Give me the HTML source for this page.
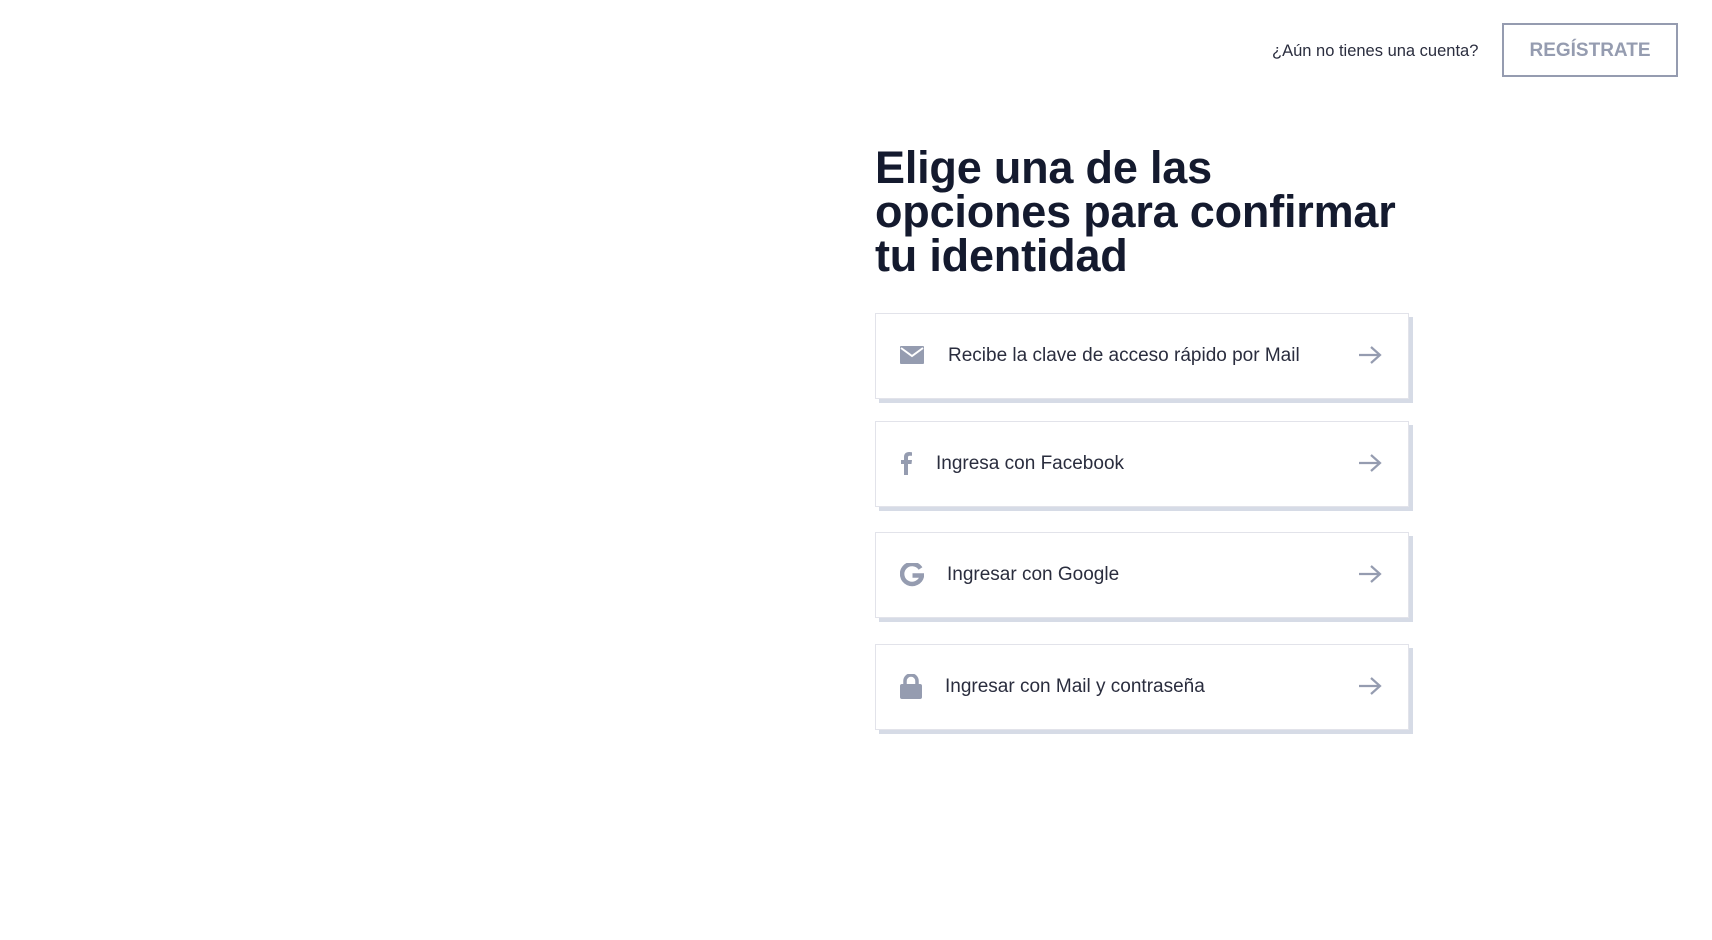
<!DOCTYPE html>
<html><head><meta charset="utf-8"><style>
body{margin:0;width:1712px;height:940px;background:#fff;font-family:"Liberation Sans",sans-serif;position:relative;overflow:hidden}
.q{position:absolute;left:1272px;top:42px;font-size:16.5px;color:#2a2d3e}
.reg{position:absolute;left:1502px;top:23px;width:172px;height:50px;border:2px solid #959cb0;color:#959cb0;font-weight:bold;font-size:19px;text-align:center;line-height:52px}
h1{position:absolute;left:875px;top:146px;margin:0;font-size:45px;line-height:44px;color:#141a2e;font-weight:bold;letter-spacing:-0.2px}
.card{position:absolute;left:875px;width:532px;height:84px;border:1px solid #e2e3ea;box-shadow:4px 4px 0 #d6dbe6;background:#fff}
.card span{position:absolute;top:0;line-height:84px;font-size:19px;color:#2a2d3e}
.card svg{position:absolute}
.arr{right:26px;top:31px}
</style></head><body>
<div class="q">¿Aún no tienes una cuenta?</div>
<div class="reg">REGÍSTRATE</div>
<h1>Elige una de las<br>opciones para confirmar<br>tu identidad</h1>

<div class="card" style="top:313px">
<svg style="left:24px;top:32px" width="24" height="18" viewBox="0 0 24 18"><rect width="24" height="18" rx="1" fill="#959cb0"/><path d="M1 2l11 8 11-8" stroke="#fff" stroke-width="2" fill="none"/></svg>
<span style="left:72px">Recibe la clave de acceso rápido por Mail</span>
<svg class="arr" width="24" height="20" viewBox="0 0 24 20"><path d="M1 10h21M13 2l9 8-9 8" stroke="#959cb0" stroke-width="2.2" fill="none"/></svg>
</div>

<div class="card" style="top:421px">
<svg style="left:24px;top:30px" width="12" height="23" viewBox="0 0 12 23"><path d="M8 23V12h3.5l.5-4H8V5.5C8 4.4 8.4 3.8 10 3.8h2V.3C11.5.2 10.3 0 9 0 6 0 4 1.8 4 5.1V8H1v4h3v11z" fill="#959cb0"/></svg>
<span style="left:60px">Ingresa con Facebook</span>
<svg class="arr" width="24" height="20" viewBox="0 0 24 20"><path d="M1 10h21M13 2l9 8-9 8" stroke="#959cb0" stroke-width="2.2" fill="none"/></svg>
</div>

<div class="card" style="top:532px">
<svg style="left:24px;top:30px" width="24" height="24" viewBox="0 0 24 24"><path d="M20.5 5.5A10 10 0 1 0 22 12.5H12.5" stroke="#959cb0" stroke-width="4.5" fill="none"/></svg>
<span style="left:71px">Ingresar con Google</span>
<svg class="arr" width="24" height="20" viewBox="0 0 24 20"><path d="M1 10h21M13 2l9 8-9 8" stroke="#959cb0" stroke-width="2.2" fill="none"/></svg>
</div>

<div class="card" style="top:644px">
<svg style="left:24px;top:29px" width="22" height="25" viewBox="0 0 22 25"><path d="M5 11V7a6 6 0 0 1 12 0v4" stroke="#959cb0" stroke-width="3.5" fill="none"/><rect x="0" y="10" width="22" height="15" rx="2" fill="#959cb0"/></svg>
<span style="left:69px">Ingresar con Mail y contraseña</span>
<svg class="arr" width="24" height="20" viewBox="0 0 24 20"><path d="M1 10h21M13 2l9 8-9 8" stroke="#959cb0" stroke-width="2.2" fill="none"/></svg>
</div>
</body></html>
